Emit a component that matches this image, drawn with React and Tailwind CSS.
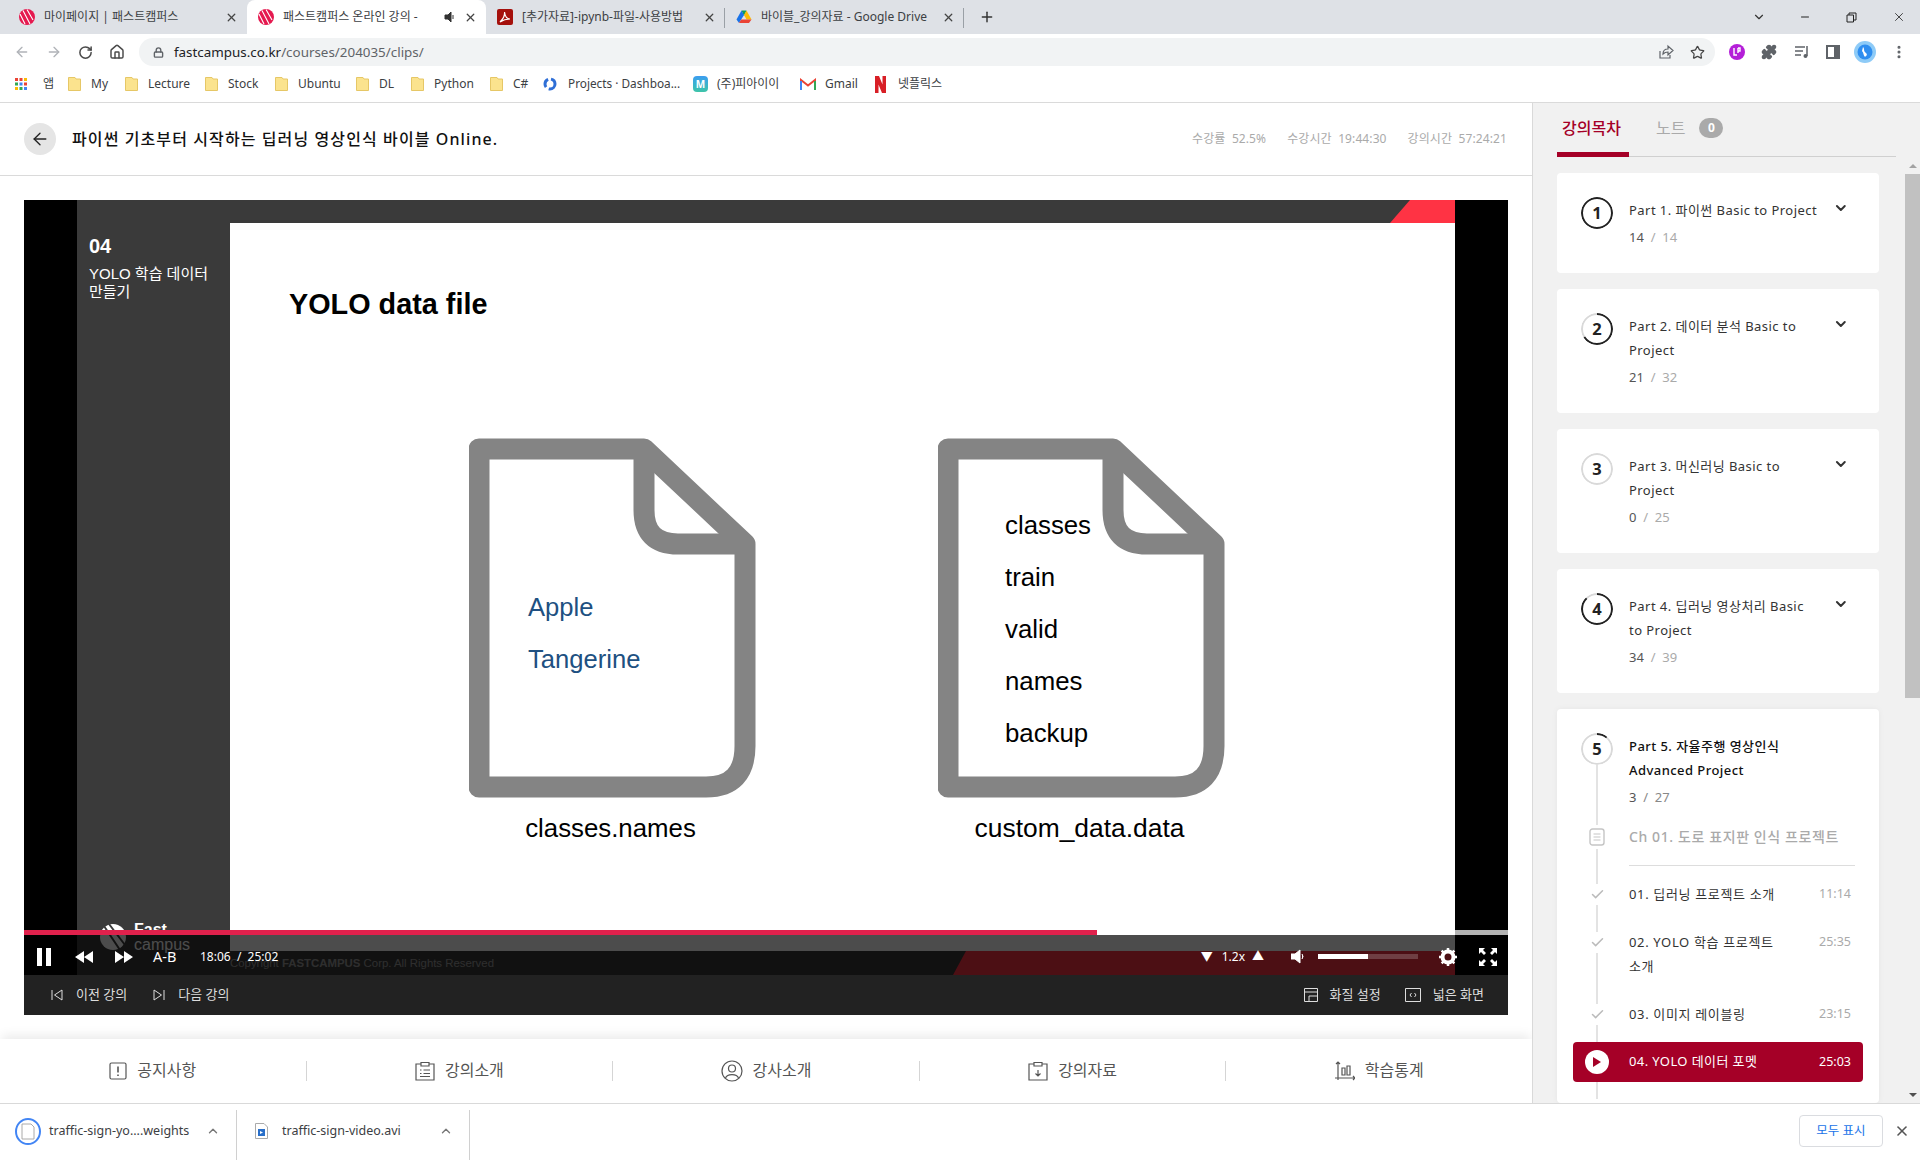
import { ArrowLeft, ArrowRight, RotateCw, House, Lock, Star, Puzzle, EllipsisVertical, Minus, X, Plus, ChevronDown, ChevronUp, Check } from 'lucide-react'

const bookmarks = [
    { label: 'My', w: 'w-[57px]' },
    { label: 'Lecture', w: 'w-[80px]' },
    { label: 'Stock', w: 'w-[70px]' },
    { label: 'Ubuntu', w: 'w-[81px]' },
    { label: 'DL', w: 'w-[55px]' },
    { label: 'Python', w: 'w-[79px]' },
    { label: 'C#', w: 'w-[53px]' },
]

const parts = [
    { n: 1, title: 'Part 1. 파이썬 Basic to Project', done: 14, total: 14 },
    { n: 2, title: 'Part 2. 데이터 분석 Basic to\nProject', done: 21, total: 32 },
    { n: 3, title: 'Part 3. 머신러닝 Basic to\nProject', done: 0, total: 25 },
    { n: 4, title: 'Part 4. 딥러닝 영상처리 Basic\nto Project', done: 34, total: 39 },
]

function FcIcon() {
    return (
        <svg width="16" height="16" viewBox="0 0 16 16" className="shrink-0">
            <circle cx="8" cy="8" r="8" fill="#e5194f" />
            <path d="M4 1.5 L11 15 M8 0.5 L14 11 M1 5 L6 15" stroke="#fff" strokeWidth="1.1" fill="none" />
        </svg>
    )
}

function PdfIcon() {
    return (
        <svg width="16" height="16" viewBox="0 0 16 16" className="shrink-0">
            <rect width="16" height="16" rx="2" fill="#a5100c" />
            <path d="M3 13 C6 10 8 6 7.5 3 C8 7 10 10 13 10 C10 10 6 11 3 13Z" stroke="#fff" strokeWidth="1.2" fill="none" />
        </svg>
    )
}

function DriveIcon() {
    return (
        <svg width="16" height="16" viewBox="0 0 16 16" className="shrink-0">
            <path d="M5.5 1.5 H10.5 L8 7 Z" fill="#0f9d58" />
            <path d="M5.5 1.5 L0.5 10.5 L3 14 L8 6Z" fill="#1a73e8" />
            <path d="M10.5 1.5 L15.5 10.5 H10.5 L8 6Z" fill="#fbbc04" />
            <path d="M3 14 H13 L15.5 10.5 H5.2Z" fill="#ea4335" />
        </svg>
    )
}

function FolderIcon() {
    return (
        <svg width="13" height="14" viewBox="0 0 13 14" className="shrink-0">
            <path d="M0.5 0.5 H7 L8 2 H12.5 V13.5 H0.5Z" fill="#fbe38e" stroke="#e6c766" />
        </svg>
    )
}

function Tab({ icon, title, active, sound, sep }) {
    return (
        <div className={`relative flex items-center w-[239px] h-[34px] pl-[11px] pr-[9px] ${active ? 'bg-white rounded-t-lg' : ''}`}>
            {icon}
            <span className="ml-[9px] flex-1 truncate text-[12px] text-[#3c4043]">{title}</span>
            {sound && (
                <svg width="12" height="12" viewBox="0 0 12 12" className="mr-[8px] shrink-0">
                    <path d="M1 4 H4 L7 1 V11 L4 8 H1Z M9 4 V8" fill="#333" stroke="#333" />
                </svg>
            )}
            <X size={13} strokeWidth={2.4} className="text-[#444] shrink-0" />
            {sep && <div className="absolute right-0 top-[8px] h-[20px] w-px bg-[#9aa0a6]" />}
        </div>
    )
}

function BrowserChrome() {
    return (
        <div className="shrink-0">
            <div className="flex h-[34px] bg-[#dee1e6] pl-[8px] items-center">
                <Tab icon={<FcIcon />} title="마이페이지 | 패스트캠퍼스" />
                <Tab icon={<FcIcon />} title="패스트캠퍼스 온라인 강의 -" active sound />
                <Tab icon={<PdfIcon />} title="[추가자료]-ipynb-파일-사용방법" sep />
                <Tab icon={<DriveIcon />} title="바이블_강의자료 - Google Drive" sep />
                <Plus size={16} strokeWidth={2.2} className="ml-[15px] text-[#333]" />
                <div className="flex-1" />
                <ChevronDown size={14} className="text-[#333] mr-[33px]" />
                <Minus size={12} className="text-[#222] mr-[35px]" />
                <svg width="11" height="11" viewBox="0 0 11 11" className="mr-[35px]">
                    <path d="M1 3 H7.5 V10 H1Z M3 3 V1 H10 V8 H7.5" fill="none" stroke="#222" />
                </svg>
                <X size={14} strokeWidth={1.4} className="text-[#222] mr-[14px]" />
            </div>

            <div className="flex items-center h-[34px] pt-[2px] bg-white">
                <ArrowLeft size={16} className="ml-[14px] text-[#b0b3b8]" />
                <ArrowRight size={16} className="ml-[16px] text-[#b0b3b8]" />
                <RotateCw size={15} strokeWidth={2.4} className="ml-[16px] text-[#4a4a4a]" />
                <House size={16} strokeWidth={2.2} className="ml-[16px] text-[#4a4a4a]" />
                <div className="ml-[14px] flex items-center w-[1576px] h-[28px] rounded-full bg-[#f1f3f4] pl-[14px] pr-[10px]">
                    <Lock size={11} strokeWidth={3} className="text-[#5f6368]" />
                    <span className="ml-[10px] text-[13.4px] text-[#5f6368]"><span className="text-[#202124]">fastcampus.co.kr</span>/courses/204035/clips/</span>
                    <div className="flex-1" />
                    <svg width="16" height="16" viewBox="0 0 16 16" className="mr-[16px]">
                        <path d="M2 7 V14 H12 V11 M5 10 C5 7 7 5 10 5 V2 L15 6.5 L10 11 V8 C8 8 6 9 5 10Z" fill="none" stroke="#5f6368" strokeWidth="1.2" />
                    </svg>
                    <Star size={15} className="text-[#444]" />
                </div>
                <svg width="16" height="16" viewBox="0 0 16 16" className="ml-[14px]">
                    <circle cx="8" cy="8" r="8" fill="#b41fd8" />
                    <path d="M5 4 V11 H8 M9 4 V9 M9 4 H11 V7 H9" fill="none" stroke="#fff" strokeWidth="1.4" />
                </svg>
                <Puzzle size={16} fill="#5f6368" className="ml-[16px] text-[#5f6368]" />
                <svg width="16" height="14" viewBox="0 0 16 14" className="ml-[17px]">
                    <path d="M1 2 H11 M1 6 H9 M1 10 H7 M13 1 V11" stroke="#5f6368" strokeWidth="1.5" fill="none" />
                    <circle cx="11.5" cy="11" r="2" fill="#5f6368" />
                </svg>
                <svg width="14" height="14" viewBox="0 0 14 14" className="ml-[16px]">
                    <path d="M1 1 H13 V13 H1Z" fill="none" stroke="#5f6368" strokeWidth="2" />
                    <rect x="8" y="1" width="5" height="12" fill="#5f6368" />
                </svg>
                <svg width="22" height="22" viewBox="0 0 22 22" className="ml-[14px]">
                    <circle cx="11" cy="11" r="11" fill="#8ecbf7" />
                    <circle cx="11" cy="11" r="7.5" fill="#2f8ef0" />
                    <path d="M9 6 C11 8 9 10 12 12 C14 14 12 15 11 16 C9 14 10 12 8 10Z" fill="#fff" />
                </svg>
                <EllipsisVertical size={16} strokeWidth={2.6} className="ml-[15px] text-[#5f6368]" />
            </div>

            <div className="flex items-center h-[35px] pb-[2px] bg-white border-b border-[#dadada] pl-[15px] text-[12px] text-[#3c4043]">
                <div className="flex items-center w-[53px]">
                    <svg width="12" height="12" viewBox="0 0 12 12">
                        <rect width="3" height="3" fill="#ea4335" />
                        <rect x="4.5" width="3" height="3" fill="#ea4335" />
                        <rect x="9" width="3" height="3" fill="#fbbc04" />
                        <rect y="4.5" width="3" height="3" fill="#34a853" />
                        <rect x="4.5" y="4.5" width="3" height="3" fill="#4285f4" />
                        <rect x="9" y="4.5" width="3" height="3" fill="#ea4335" />
                        <rect y="9" width="3" height="3" fill="#fbbc04" />
                        <rect x="4.5" y="9" width="3" height="3" fill="#34a853" />
                        <rect x="9" y="9" width="3" height="3" fill="#4285f4" />
                    </svg>
                    <span className="ml-[16px]">앱</span>
                </div>
                {bookmarks.map(b => (
                    <div key={b.label} className={`flex items-center ${b.w}`}>
                        <FolderIcon />
                        <span className="ml-[10px]">{b.label}</span>
                    </div>
                ))}
                <div className="flex items-center w-[150px]">
                    <svg width="14" height="14" viewBox="0 0 14 14">
                        <circle cx="7" cy="7" r="5" fill="none" stroke="#2f6fd6" strokeWidth="3" strokeDasharray="9 3" />
                    </svg>
                    <span className="ml-[11px] text-[11.8px]">Projects · Dashboa...</span>
                </div>
                <div className="flex items-center w-[107px]">
                    <div className="w-[15px] h-[16px] rounded-sm bg-gradient-to-b from-[#3d9cf0] to-[#3fc4a8] text-white text-[10px] font-bold flex items-center justify-center">M</div>
                    <span className="ml-[9px]">(주)피아이이</span>
                </div>
                <div className="flex items-center w-[75px]">
                    <svg width="16" height="13" viewBox="0 0 16 13">
                        <path d="M1 12 V2 L8 7.5 L15 2 V12" fill="none" stroke="#ea4335" strokeWidth="2" />
                        <path d="M1 3 V12" stroke="#4285f4" strokeWidth="2" />
                        <path d="M15 3 V12" stroke="#34a853" strokeWidth="2" />
                    </svg>
                    <span className="ml-[9px]">Gmail</span>
                </div>
                <div className="flex items-center">
                    <svg width="11" height="17" viewBox="0 0 11 17">
                        <path d="M0 0 H4 L11 17 H7Z M0 0 H3.5 V17 H0Z M7.5 0 H11 V17 H7.5Z" fill="#d81f26" />
                    </svg>
                    <span className="ml-[12px]">넷플릭스</span>
                </div>
            </div>
        </div>
    )
}

function FileShape({ children }) {
    return (
        <div className="relative w-[287px] h-[360px]">
            <svg width="287" height="360" viewBox="0 0 287 360" className="absolute inset-0">
                <path d="M10 11 H175 L276 106 V308 Q276 349 237 349 H10 Z" fill="none" stroke="#848484" strokeWidth="21" strokeLinejoin="round" />
                <path d="M175 11 V72 Q175 106 209 106 H276" fill="none" stroke="#848484" strokeWidth="21" />
            </svg>
            {children}
        </div>
    )
}

function Slide() {
    const names = ['classes', 'train', 'valid', 'names', 'backup']
    return (
        <div className="absolute inset-0 flex bg-black font-['Liberation_Sans',sans-serif]">
            <div className="w-[53px] shrink-0" />
            <div className="flex-1 flex flex-col bg-[#3a3a3a]">
                <div className="flex-1 flex min-h-0">
                    <div className="w-[153px] shrink-0 pl-[12px] pt-[34px] text-white relative">
                        <div className="text-[20px] leading-[24px] font-bold">04</div>
                        <div className="mt-[7px] text-[15px] leading-[18px] font-['Liberation_Sans','Noto_Sans_CJK_KR',sans-serif]">YOLO 학습 데이터<br />만들기</div>
                        <div className="absolute left-[23px] top-[722px] flex items-center">
                            <svg width="26" height="28" viewBox="0 0 26 28">
                                <circle cx="13" cy="14" r="13" fill="#fff" />
                                <path d="M4 3 L20 27 M9 1 L25 22" stroke="#3a3a3a" strokeWidth="2" />
                            </svg>
                            <div className="ml-[8px] text-[16px] leading-[15px] text-white">
                                <div className="font-bold">Fast</div>
                                <div>campus</div>
                            </div>
                        </div>
                    </div>
                    <div className="flex-1 flex flex-col">
                        <div className="h-[23px] shrink-0 relative">
                            <div className="absolute right-0 top-0 w-[65px] h-[23px] bg-[#ff3344] [clip-path:polygon(20px_0,100%_0,100%_100%,0_100%)]" />
                        </div>
                        <div className="flex-1 bg-white pl-[59px] pt-[64px] relative">
                            <div className="text-[28.8px] leading-[34px] font-bold text-black">YOLO data file</div>
                            <div className="flex gap-[182px] ml-[180px] mt-[117px]">
                                <div>
                                    <FileShape>
                                        <div className="absolute left-[59px] top-[143px] text-[25.6px] leading-[52px] text-[#205081]">
                                            <div>Apple</div>
                                            <div>Tangerine</div>
                                        </div>
                                    </FileShape>
                                    <div className="mt-[14px] w-[287px] -ml-[2px] text-center text-[25.8px] leading-[32px] text-black">classes.names</div>
                                </div>
                                <div>
                                    <FileShape>
                                        <div className="absolute left-[67px] top-[61px] text-[25.8px] leading-[52px] text-black">
                                            {names.map(n => <div key={n}>{n}</div>)}
                                        </div>
                                    </FileShape>
                                    <div className="mt-[14px] w-[287px] -ml-[2px] text-center text-[26.4px] leading-[32px] text-black">custom_data.data</div>
                                </div>
                            </div>
                        </div>
                    </div>
                </div>
                <div className="h-[24px] shrink-0 flex relative">
                    <div className="flex-1 pl-[153px] text-[11.4px] leading-[24px] text-white/50">Copyright <b>FASTCAMPUS</b> Corp. All Rights Reserved</div>
                    <div className="w-[502px] bg-[#ff3344] [clip-path:polygon(13px_0,100%_0,100%_100%,0_100%)]" />
                </div>
            </div>
            <div className="w-[53px] shrink-0" />
        </div>
    )
}

function VideoPlayer() {
    return (
        <div className="mx-[24px] mt-[24px]">
            <div className="relative h-[775px] overflow-hidden">
                <Slide />
                {/* player controls */}
                <div className="absolute left-0 right-0 bottom-0 text-white">
                    <div className="h-[5px] bg-white/70">
                        <div className="h-full bg-[#e0214c]" style={{ width: `${(1073 / 1484) * 100}%` }} />
                    </div>
                    <div className="flex items-center h-[40px] pt-[3px] pl-[13px] bg-black/70">
                        <div className="flex gap-[4px]">
                            <div className="w-[5px] h-[18px] bg-white" />
                            <div className="w-[5px] h-[18px] bg-white" />
                        </div>
                        <svg width="18" height="12" viewBox="0 0 18 12" className="ml-[24px]"><path d="M9 0 V12 L0 6Z M18 0 V12 L9 6Z" fill="#fff" /></svg>
                        <svg width="18" height="12" viewBox="0 0 18 12" className="ml-[22px]"><path d="M0 0 V12 L9 6Z M9 0 V12 L18 6Z" fill="#fff" /></svg>
                        <span className="ml-[20px] w-[27px] text-[14.5px]">A-B</span>
                        <span className="ml-[20px] text-[12px] whitespace-pre">18:06  /  25:02</span>
                        <div className="flex-1" />
                        <span className="text-[12px]">▼</span>
                        <span className="ml-[9px] text-[12px]">1.2x</span>
                        <span className="ml-[7px] text-[12px]">▲</span>
                        <svg width="13" height="15" viewBox="0 0 13 15" className="ml-[27px]"><path d="M0 5 H4 L9 1 V14 L4 10 H0Z M11 5 Q13 7.5 11 10" fill="#fff" stroke="#fff" /></svg>
                        <div className="ml-[14px] w-[100px] h-[5px] bg-white/20">
                            <div className="h-full w-1/2 bg-white" />
                        </div>
                        <svg width="18" height="18" viewBox="0 0 18 18" className="ml-[21px]">
                            <circle cx="9" cy="9" r="5.5" fill="none" stroke="#fff" strokeWidth="4" />
                            <path d="M9 0 V18 M0 9 H18 M2.6 2.6 L15.4 15.4 M15.4 2.6 L2.6 15.4" stroke="#fff" strokeWidth="2.5" strokeDasharray="3 12 3" />
                        </svg>
                        <svg width="18" height="18" viewBox="0 0 18 18" className="ml-[22px] mr-[11px]">
                            <path d="M0 0 H6 L4 2 L7 5 L5 7 L2 4 L0 6Z M18 0 H12 L14 2 L11 5 L13 7 L16 4 L18 6Z M0 18 H6 L4 16 L7 13 L5 11 L2 14 L0 12Z M18 18 H12 L14 16 L11 13 L13 11 L16 14 L18 12Z" fill="#fff" />
                        </svg>
                    </div>
                </div>
            </div>
            <div className="flex items-center h-[40px] bg-[#222] text-[13px] text-[#ddd]">
                <svg width="12" height="12" viewBox="0 0 12 12" className="ml-[27px]"><path d="M1 1 V11 M11 1 V11 L3.5 6Z" fill="none" stroke="#ddd" /></svg>
                <span className="ml-[13px]">이전 강의</span>
                <svg width="12" height="12" viewBox="0 0 12 12" className="ml-[26px]"><path d="M11 1 V11 M1 1 V11 L8.5 6Z" fill="none" stroke="#ddd" /></svg>
                <span className="ml-[13px]">다음 강의</span>
                <div className="flex-1" />
                <svg width="14" height="14" viewBox="0 0 14 14"><path d="M0.5 0.5 H13.5 V13.5 H0.5Z M0.5 4 H13.5 M5 13.5 V8 H13.5" fill="none" stroke="#ddd" /></svg>
                <span className="ml-[12px]">화질 설정</span>
                <svg width="16" height="14" viewBox="0 0 16 14" className="ml-[24px]"><path d="M0.5 0.5 H15.5 V13.5 H0.5Z M6.5 5 L5 7 L6.5 9 M9.5 5 L11 7 L9.5 9" fill="none" stroke="#ddd" /></svg>
                <span className="ml-[12px] mr-[24px]">넓은 화면</span>
            </div>
        </div>
    )
}

function InfoTabs() {
    const cls = 'flex-1 flex items-center justify-center gap-[10px] h-[20px]'
    const iconProps = { fill: 'none', stroke: '#555', strokeWidth: 1.2 }
    return (
        <div className="shrink-0 h-[64px] mt-auto flex items-center bg-white shadow-[0_-6px_10px_-2px_rgba(0,0,0,0.08)] text-[16px] text-[#555]">
            <div className={`${cls} border-r border-[#d5d5d5]`}>
                <svg width="18" height="18" viewBox="0 0 18 18" {...iconProps}><rect x="1" y="1" width="16" height="16" rx="1.5" /><path d="M9 4.5 V10.5 M9 12.5 V14" strokeWidth="1.6" /></svg>
                <span className="pb-[3px]">공지사항</span>
            </div>
            <div className={`${cls} border-r border-[#d5d5d5]`}>
                <svg width="20" height="20" viewBox="0 0 20 20" {...iconProps}><path d="M6 3 H1 V19 H19 V3 H14 M6 1.5 H14 V5 H6Z M5 9 H6.5 M8.5 9 H15 M5 12.5 H6.5 M8.5 12.5 H15 M5 15.5 H15" /></svg>
                <span className="pb-[3px]">강의소개</span>
            </div>
            <div className={`${cls} border-r border-[#d5d5d5]`}>
                <svg width="22" height="22" viewBox="0 0 22 22" {...iconProps}><circle cx="11" cy="11" r="10" /><circle cx="11" cy="8.5" r="3.5" /><path d="M4.5 18 C6 13.5 16 13.5 17.5 18" /></svg>
                <span className="pb-[3px]">강사소개</span>
            </div>
            <div className={`${cls} border-r border-[#d5d5d5]`}>
                <svg width="20" height="20" viewBox="0 0 20 20" {...iconProps}><path d="M6 3 H1 V19 H19 V3 H14 M6 1.5 H14 V5 H6Z M10 9 V15 M7.5 12.5 L10 15 L12.5 12.5" /></svg>
                <span className="pb-[3px]">강의자료</span>
            </div>
            <div className={cls}>
                <svg width="20" height="20" viewBox="0 0 20 20" {...iconProps}><path d="M3 1 V19 M1 3 L3 1 L5 3 M0 17 H20 M18 15 L20 17 L18 19" /><path d="M7 7 H10 V14 H7Z M12 5 H15 V14 H12Z" /></svg>
                <span className="pb-[3px]">학습통계</span>
            </div>
        </div>
    )
}

function ProgressRing({ n, done, total }) {
    const c = 2 * Math.PI * 15
    return (
        <svg width="32" height="32" viewBox="0 0 32 32" className="shrink-0 bg-white rounded-full relative">
            <circle cx="16" cy="16" r="15" fill="#fff" stroke="#d9d9d9" strokeWidth="2" />
            <circle cx="16" cy="16" r="15" fill="none" stroke="#222" strokeWidth="2" strokeDasharray={`${(done / total) * c} ${c}`} transform="rotate(-90 16 16)" />
            <text x="16" y="22" textAnchor="middle" fontSize="16.5" fontWeight="700" fill="#222">{n}</text>
        </svg>
    )
}

function Count({ done, total }) {
    return (
        <div className="mt-[3px] text-[13px] leading-[24px] text-[#555]">
            {done}<span className="text-[#aaa] whitespace-pre">  /  {total}</span>
        </div>
    )
}

function PartCard({ n, title, done, total }) {
    return (
        <div className="flex bg-white rounded p-[24px] pr-[30px]">
            <ProgressRing n={n} done={done} total={total} />
            <div className="ml-[16px] w-[200px] pt-[1px]">
                <div className="text-[13px] leading-[24px] tracking-[0.45px] whitespace-pre-line text-[#333]">{title}</div>
                <Count done={done} total={total} />
            </div>
            <ChevronDown size={16} strokeWidth={3} className="ml-[8px] mt-[3px] text-[#333]" />
        </div>
    )
}

function Lesson({ title, time, mt }) {
    return (
        <div className={`flex ${mt}`}>
            <div className="w-[48px] shrink-0 flex justify-center h-[24px] items-center -ml-[8px] mr-[8px]">
                <div className="bg-white py-[3px]">
                    <Check size={15} strokeWidth={2.4} className="text-[#bbb]" />
                </div>
            </div>
            <div className="w-[150px] text-[13px] leading-[24px] tracking-[0.65px] break-keep text-[#333]">{title}</div>
            <div className="ml-auto text-[12.5px] leading-[24px] text-[#aaa] pr-[4px]">{time}</div>
        </div>
    )
}

function Sidebar() {
    return (
        <div className="w-[388px] shrink-0 flex flex-col bg-[#f1f1f1] border-l border-[#d9d9d9] overflow-hidden">
            <div className="flex items-center h-[54px] pb-[3px] ml-[24px] mr-[24px] border-b border-[#d0d0d0] relative shrink-0">
                <div className="w-[72px] pl-[5px] text-[16px] text-[#a50027] font-medium">강의목차</div>
                <div className="absolute left-0 bottom-[-1px] w-[72px] h-[5px] bg-[#a50027]" />
                <div className="ml-[27px] text-[16px] text-[#aaa]">노트</div>
                <div className="ml-[14px] w-[24px] h-[20px] rounded-full bg-[#aaa] text-white text-[12px] font-bold flex items-center justify-center">0</div>
            </div>
            <div className="flex-1 flex min-h-0">
                <div className="ml-[24px] w-[322px] pt-[16px] flex flex-col gap-[16px] shrink-0">
                    {parts.map(p => <PartCard key={p.n} {...p} />)}
                    <div className="relative flex-1 bg-white rounded pt-[24px] pl-[24px] pr-[24px] shadow-[0_0_6px_rgba(0,0,0,0.05)]">
                        <div className="absolute left-[39px] top-[40px] w-[2px] h-[350px] bg-[#e3e3e3]" />
                        <div className="flex relative">
                            <ProgressRing n={5} done={3} total={27} />
                            <div className="ml-[16px] w-[196px] pt-[1px]">
                                <div className="text-[13px] leading-[24px] tracking-[0.45px] font-medium text-[#111]">Part 5. 자율주행 영상인식 Advanced Project</div>
                                <div className="mt-[3px] text-[13px] leading-[24px] text-[#555]">3<span className="text-[#888] whitespace-pre">  /  27</span></div>
                            </div>
                        </div>
                        <div className="flex relative mt-[16px]">
                            <div className="w-[32px] flex justify-center items-center h-[24px]">
                                <div className="bg-white py-[3px]">
                                    <svg width="16" height="18" viewBox="0 0 16 18">
                                        <rect x="1" y="1" width="14" height="16" rx="2.5" fill="#fff" stroke="#c5c5c5" strokeWidth="1.4" />
                                        <path d="M4.5 6 H11.5 M4.5 9 H11.5 M4.5 12 H11.5" stroke="#c5c5c5" />
                                    </svg>
                                </div>
                            </div>
                            <div className="ml-[16px] text-[14px] leading-[24px] font-medium text-[#aaa] tracking-[0.6px] whitespace-nowrap">Ch 01. 도로 표지판 인식 프로젝트</div>
                        </div>
                        <div className="ml-[48px] mr-0 mt-[16px] h-px bg-[#ddd]" />
                        <div className="relative">
                            <Lesson title="01. 딥러닝 프로젝트 소개" time="11:14" mt="mt-[16px]" />
                            <Lesson title="02. YOLO 학습 프로젝트 소개" time="25:35" mt="mt-[24px]" />
                            <Lesson title="03. 이미지 레이블링" time="23:15" mt="mt-[24px]" />
                        </div>
                        <div className="relative flex items-center h-[40px] mt-[16px] -ml-[8px] w-[290px] rounded bg-[#a50027] text-white">
                            <div className="ml-[12px] w-[24px] h-[24px] rounded-full bg-white flex items-center justify-center">
                                <svg width="8" height="10" viewBox="0 0 8 10"><path d="M0 0 L8 5 L0 10Z" fill="#a50027" /></svg>
                            </div>
                            <span className="ml-[20px] text-[13px] tracking-[0.4px]">04. YOLO 데이터 포멧</span>
                            <span className="ml-auto mr-[12px] text-[12.5px]">25:03</span>
                        </div>
                    </div>
                </div>
                <div className="ml-auto w-[15px] flex flex-col items-center">
                    <div className="h-[17px] flex items-center justify-center">
                        <div className="w-0 h-0 border-x-[4px] border-x-transparent border-b-[4px] border-b-[#a3a3a3]" />
                    </div>
                    <div className="w-full h-[524px] bg-[#c1c1c1]" />
                    <div className="flex-1" />
                    <div className="h-[17px] flex items-center justify-center">
                        <div className="w-0 h-0 border-x-[4px] border-x-transparent border-t-[4px] border-t-[#505050]" />
                    </div>
                </div>
            </div>
        </div>
    )
}

function DownloadShelf() {
    return (
        <div className="shrink-0 h-[57px] flex bg-white border-t border-[#d9d9d9] text-[12.5px] text-[#3c4043]">
            <div className="w-[237px] mt-[6px] border-r border-[#d0d0d0] pl-[15px]">
                <div className="flex items-center h-[42px]">
                    <svg width="26" height="27" viewBox="0 0 26 27">
                        <ellipse cx="13" cy="13.5" rx="12" ry="12.5" fill="none" stroke="#4285f4" strokeWidth="2" />
                        <path d="M7 6 H16 L19 9 V21 H7Z" fill="#fff" stroke="#aaa" />
                    </svg>
                    <span className="ml-[8px] w-[151px]">traffic-sign-yo....weights</span>
                    <ChevronUp size={14} strokeWidth={2.4} className="ml-[6px] text-[#777]" />
                </div>
            </div>
            <div className="w-[233px] mt-[6px] border-r border-[#d0d0d0] pl-[18px]">
                <div className="flex items-center h-[42px]">
                    <svg width="13" height="16" viewBox="0 0 13 16">
                        <path d="M0.5 0.5 H9 L12.5 4 V15.5 H0.5Z" fill="#fff" stroke="#aaa" />
                        <rect x="3" y="6" width="7" height="7" fill="#2a6fc9" />
                        <path d="M5 8 L8 9.5 L5 11Z" fill="#fff" />
                    </svg>
                    <span className="ml-[14px] w-[153px]">traffic-sign-video.avi</span>
                    <ChevronUp size={14} strokeWidth={2.4} className="ml-[4px] text-[#777]" />
                </div>
            </div>
            <div className="flex-1" />
            <div className="flex items-center h-[54px]">
                <div className="w-[84px] h-[32px] rounded border border-[#dadce0] flex items-center justify-center text-[#1a73e8]">모두 표시</div>
                <X size={16} strokeWidth={2.4} className="ml-[11px] mr-[10px] text-[#555]" />
            </div>
        </div>
    )
}

export default function App() {
    return (
        <div className="w-[1920px] h-[1160px] flex flex-col overflow-hidden bg-white font-['Noto_Sans','Noto_Sans_CJK_KR',sans-serif]">
            <BrowserChrome />
            <div className="flex-1 flex min-h-0">
                <div className="w-[1532px] shrink-0 flex flex-col">
                    <div className="shrink-0 flex items-center h-[73px] pl-[24px] pr-[25px] border-b border-[#dadada]">
                        <div className="w-[32px] h-[32px] rounded-full bg-[#e5e5e5] flex items-center justify-center">
                            <ArrowLeft size={20} strokeWidth={1.6} className="text-[#222]" />
                        </div>
                        <div className="ml-[16px] text-[16px] tracking-[1.1px] font-medium text-[#111]">파이썬 기초부터 시작하는 딥러닝 영상인식 바이블 Online.</div>
                        <div className="flex-1" />
                        <div className="flex gap-[21px] text-[12px] tracking-[0.1px] text-[#aaa] whitespace-pre">
                            <span>수강률  52.5%</span>
                            <span>수강시간  19:44:30</span>
                            <span>강의시간  57:24:21</span>
                        </div>
                    </div>
                    <VideoPlayer />
                    <InfoTabs />
                </div>
                <Sidebar />
            </div>
            <DownloadShelf />
        </div>
    )
}
